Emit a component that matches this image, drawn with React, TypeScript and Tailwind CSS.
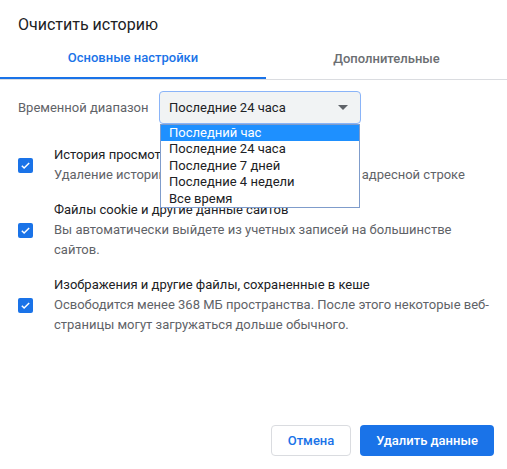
import React from 'react';

const options = ['Последний час', 'Последние 24 часа', 'Последние 7 дней', 'Последние 4 недели', 'Все время'];

const CheckBox: React.FC = () => (
  <div className="w-[15px] h-[15px] rounded-[2px] bg-[#1a73e8] flex items-center justify-center shrink-0">
    <svg width="11" height="11" viewBox="0 0 24 24" fill="none">
      <path d="M4 12.5l5 5L20 6.5" stroke="white" strokeWidth="3.2" />
    </svg>
  </div>
);

const Item: React.FC<{ title: string; desc: string }> = ({ title, desc }) => (
  <div className="flex items-center">
    <div className="w-[36px] shrink-0">
      <CheckBox />
    </div>
    <div className="flex flex-col pr-[14px] text-[13px] leading-[20px]">
      <span className="text-[#202124]">{title}</span>
      <span className="text-[#5f6368]">{desc}</span>
    </div>
  </div>
);

export default function App() {
  return (
    <div
      className="w-[507px] h-[469px] bg-white flex flex-col"
      style={{ fontFamily: 'Roboto, "Noto Sans", sans-serif' }}
    >
      <div className="pt-[15px] pl-[18px] text-[16px] leading-[20px] text-[#202124]">Очистить историю</div>

      <div className="mt-[4px] flex border-b border-[#dadce0] text-[13px] font-medium">
        <div className="w-[266px] h-[40px] flex items-center justify-center border-b-2 border-[#1a73e8] text-[#1a73e8] -mb-px">
          Основные настройки
        </div>
        <div className="flex-1 h-[40px] flex items-center justify-center text-[#6b6e72]">Дополнительные</div>
      </div>

      <div className="pl-[18px] mt-[11px] flex items-center text-[13px]">
        <span className="w-[141px] text-[#5f6368]">Временной диапазон</span>
        <div className="relative">
          <div className="w-[202px] h-[33px] rounded-[4px] border border-[#8ab4f8] bg-[#f1f3f4] flex items-center justify-between pl-[9px] pr-[12px] text-[#202124]">
            <span>Последние 24 часа</span>
            <svg width="10" height="5" viewBox="0 0 10 5">
              <path d="M0 0h10L5 5z" fill="#5f6368" />
            </svg>
          </div>
          <div className="absolute left-[1px] top-full w-[200px] border border-[#7f9ccb] bg-white z-10 leading-[16.4px]">
            {options.map((o, i) => (
              <div
                key={o}
                className={
                  i === 0
                    ? 'h-[16.4px] pl-[8px] bg-[#1e90ff] text-white'
                    : 'h-[16.4px] pl-[8px] text-[#202124]'
                }
              >
                {o}
              </div>
            ))}
          </div>
        </div>
      </div>

      <div className="pl-[18px] mt-[21px] flex flex-col gap-[15px]">
        <Item title="История просмотров" desc="Удаление истории и подсказок автозаполнения в адресной строке" />
        <Item
          title="Файлы cookie и другие данные сайтов"
          desc="Вы автоматически выйдете из учетных записей на большинстве сайтов."
        />
        <Item
          title="Изображения и другие файлы, сохраненные в кеше"
          desc="Освободится менее 368 МБ пространства. После этого некоторые веб-страницы могут загружаться дольше обычного."
        />
      </div>

      <div className="mt-auto pb-[13px] pr-[13px] flex justify-end gap-[9px] text-[13px] font-medium">
        <button className="w-[80px] h-[31px] rounded-[4px] border border-[#dadce0] bg-white text-[#1a73e8]">
          Отмена
        </button>
        <button className="w-[134px] h-[31px] rounded-[4px] bg-[#1a73e8] text-white">Удалить данные</button>
      </div>
    </div>
  );
}
